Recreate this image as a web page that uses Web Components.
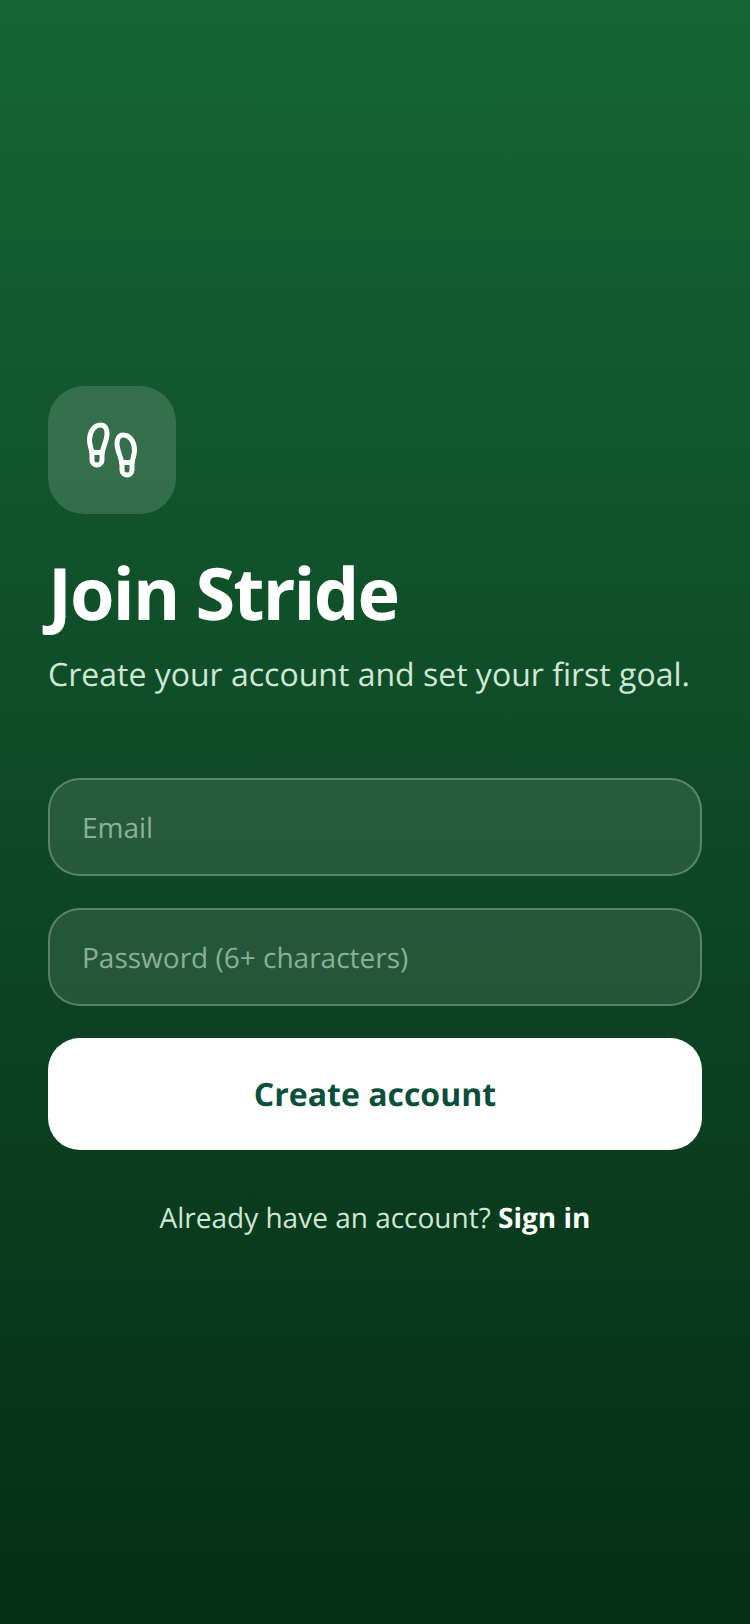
<!DOCTYPE html>
<html>
<head>
<meta charset="utf-8">
<title>Join Stride</title>
<style>
  html, body { margin: 0; padding: 0; height: 100%; }
  body { font-family: "Open Sans", sans-serif; text-rendering: geometricPrecision; }
</style>
</head>
<body>
<signup-screen>
  <brand-tile slot="brand"></brand-tile>
  <h1 slot="title">Join Stride</h1>
  <p slot="subtitle">Create your account and set your first goal.</p>
  <text-field>Email</text-field>
  <text-field>Password (6+ characters)</text-field>
  <primary-button>Create account</primary-button>
  <span slot="footer">Already have an account? <text-link>Sign in</text-link></span>
</signup-screen>

<script>
class SignupScreen extends HTMLElement {
    constructor() {
        super();
        this.attachShadow({ mode: 'open' });
        this.shadowRoot.innerHTML = `
            <style>
                :host {
                    display: flex;
                    flex-direction: column;
                    justify-content: center;
                    box-sizing: border-box;
                    width: 750px;
                    height: 1624px;
                    padding: 0 48px;
                    background: linear-gradient(180deg, #166534 0%, #052e16 100%);
                    color: #fff;
                }
                .form {
                    display: flex;
                    flex-direction: column;
                    gap: 32px;
                    margin-top: 79px;
                }
                ::slotted(h1) {
                    margin: 36px 0 0;
                    font-size: 72px;
                    line-height: 86px;
                    font-weight: 700;
                    letter-spacing: -1.8px;
                    color: #fff;
                }
                ::slotted(p) {
                    margin: 15px 0 0;
                    font-size: 32px;
                    line-height: 48px;
                    color: #d0e6d6;
                }
                .footer {
                    margin-top: 48px;
                    padding-bottom: 1px;
                    text-align: center;
                    font-size: 28px;
                    line-height: 40px;
                    color: #d0e6d6;
                }
            </style>
            <slot name="brand"></slot>
            <slot name="title"></slot>
            <slot name="subtitle"></slot>
            <div class="form"><slot></slot></div>
            <div class="footer"><slot name="footer"></slot></div>
        `;
    }
}

class BrandTile extends HTMLElement {
    constructor() {
        super();
        this.attachShadow({ mode: 'open' });
        this.shadowRoot.innerHTML = `
            <style>
                :host {
                    display: flex;
                    align-items: center;
                    justify-content: center;
                    width: 128px;
                    height: 128px;
                    border-radius: 36px;
                    background: rgba(255, 255, 255, 0.15);
                }
                svg { display: block; }
            </style>
            <svg width="60" height="60" viewBox="0 0 24 24" fill="none" stroke="#fff" stroke-width="2" stroke-linecap="round" stroke-linejoin="round">
                <path d="M4 16v-2.38C4 11.5 2.97 10.5 3 8c.03-2.72 1.49-6 4.5-6C9.37 2 10 3.8 10 5.5c0 3.11-2 5.66-2 8.68V16a2 2 0 1 1-4 0Z"/>
                <path d="M20 20v-2.38c0-2.12 1.03-3.12 1-5.62-.03-2.72-1.49-6-4.5-6C14.63 6 14 7.8 14 9.5c0 3.11 2 5.66 2 8.68V20a2 2 0 1 0 4 0Z"/>
                <path d="M16 17h4"/>
                <path d="M4 13h4"/>
            </svg>
        `;
    }
}

class TextField extends HTMLElement {
    constructor() {
        super();
        this.attachShadow({ mode: 'open' });
        this.shadowRoot.innerHTML = `
            <style>
                :host {
                    display: flex;
                    align-items: center;
                    box-sizing: border-box;
                    height: 98px;
                    padding: 2px 32px 0;
                    border: 2px solid rgba(255, 255, 255, 0.25);
                    border-radius: 32px;
                    background: rgba(255, 255, 255, 0.1);
                    color: rgba(212, 235, 218, 0.6);
                    font-size: 28px;
                }
            </style>
            <slot></slot>
        `;
    }
}

class PrimaryButton extends HTMLElement {
    constructor() {
        super();
        this.attachShadow({ mode: 'open' });
        this.shadowRoot.innerHTML = `
            <style>
                :host {
                    display: flex;
                    align-items: center;
                    justify-content: center;
                    box-sizing: border-box;
                    height: 112px;
                    padding-top: 2px;
                    border-radius: 32px;
                    background: #fff;
                    color: #0a4f3c;
                    font-size: 32px;
                    font-weight: 700;
                }
            </style>
            <slot></slot>
        `;
    }
}

class TextLink extends HTMLElement {
    constructor() {
        super();
        this.attachShadow({ mode: 'open' });
        this.shadowRoot.innerHTML = `
            <style>
                :host {
                    display: inline;
                    color: #fff;
                    font-weight: 700;
                }
            </style>
            <slot></slot>
        `;
    }
}

customElements.define('signup-screen', SignupScreen);
customElements.define('brand-tile', BrandTile);
customElements.define('text-field', TextField);
customElements.define('primary-button', PrimaryButton);
customElements.define('text-link', TextLink);
</script>
</body>
</html>
